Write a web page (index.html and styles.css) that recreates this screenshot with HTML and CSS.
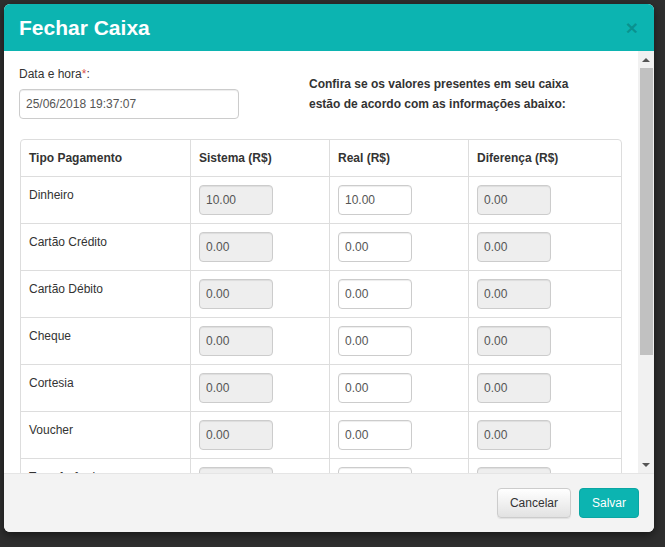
FILE: index.html
```html
<!DOCTYPE html>
<html lang="pt-BR">
<head>
<meta charset="utf-8">
<title>Fechar Caixa</title>
<link rel="stylesheet" href="styles.css">
</head>
<body>
<div class="backdrop">
  <div class="modal">
    <div class="modal-header">
      <h4 class="modal-title">Fechar Caixa</h4>
      <span class="close">×</span>
    </div>
    <div class="modal-main">
      <div class="modal-body">
        <div class="top-row">
          <div class="field">
            <label class="label">Data e hora<span class="req">*</span>:</label>
            <input class="inp inp-date" type="text" value="25/06/2018 19:37:07">
          </div>
          <p class="notice">Confira se os valores presentes em seu caixa<br>estão de acordo com as informações abaixo:</p>
        </div>
        <div class="panel">
          <table class="grid">
            <thead>
              <tr>
                <th class="c1">Tipo Pagamento</th>
                <th class="c2">Sistema (R$)</th>
                <th class="c3">Real (R$)</th>
                <th class="c4">Diferença (R$)</th>
              </tr>
            </thead>
            <tbody>
              <tr><td>Dinheiro</td><td><input class="inp ro" value="10.00" readonly></td><td><input class="inp" value="10.00"></td><td><input class="inp ro" value="0.00" readonly></td></tr>
              <tr><td>Cartão Crédito</td><td><input class="inp ro" value="0.00" readonly></td><td><input class="inp" value="0.00"></td><td><input class="inp ro" value="0.00" readonly></td></tr>
              <tr><td>Cartão Débito</td><td><input class="inp ro" value="0.00" readonly></td><td><input class="inp" value="0.00"></td><td><input class="inp ro" value="0.00" readonly></td></tr>
              <tr><td>Cheque</td><td><input class="inp ro" value="0.00" readonly></td><td><input class="inp" value="0.00"></td><td><input class="inp ro" value="0.00" readonly></td></tr>
              <tr><td>Cortesia</td><td><input class="inp ro" value="0.00" readonly></td><td><input class="inp" value="0.00"></td><td><input class="inp ro" value="0.00" readonly></td></tr>
              <tr><td>Voucher</td><td><input class="inp ro" value="0.00" readonly></td><td><input class="inp" value="0.00"></td><td><input class="inp ro" value="0.00" readonly></td></tr>
              <tr><td>Transferência</td><td><input class="inp ro" value="0.00" readonly></td><td><input class="inp" value="0.00"></td><td><input class="inp ro" value="0.00" readonly></td></tr>
              <tr><td>Outros</td><td><input class="inp ro" value="0.00" readonly></td><td><input class="inp" value="0.00"></td><td><input class="inp ro" value="0.00" readonly></td></tr>
            </tbody>
          </table>
        </div>
      </div>
      <div class="scrollbar">
        <div class="sb-btn sb-up"></div>
        <div class="sb-track"><div class="sb-thumb"></div></div>
        <div class="sb-btn sb-down"></div>
      </div>
    </div>
    <div class="modal-footer">
      <button class="btn btn-default">Cancelar</button>
      <button class="btn btn-primary">Salvar</button>
    </div>
  </div>
</div>
</body>
</html>
```
FILE: styles.css
```css
* { box-sizing: border-box; }

body {
  margin: 0;
  width: 665px;
  height: 547px;
  overflow: hidden;
  background: #2e2e2e;
  font-family: "Liberation Sans", Arial, sans-serif;
  font-size: 12px;
  color: #333;
}

.backdrop {
  padding: 4px 0 0 4px;
}

.modal {
  width: 650px;
  height: 528px;
  background: #fff;
  border-radius: 6px;
  overflow: hidden;
  display: flex;
  flex-direction: column;
  box-shadow: 0 3px 9px rgba(0, 0, 0, 0.5);
}

.modal-header {
  flex: none;
  height: 47px;
  background: #0cb4b1;
  display: flex;
  align-items: center;
  padding: 0 16px 0 15px;
}

.modal-title {
  margin: 0;
  font-size: 21px;
  font-weight: bold;
  line-height: 1;
  color: #fff;
}

.close {
  margin-left: auto;
  font-size: 21px;
  font-weight: bold;
  line-height: 1;
  color: rgba(0, 0, 0, 0.2);
}

.modal-main {
  flex: 1;
  min-height: 0;
  display: flex;
}

.modal-body {
  flex: 1;
  min-width: 0;
  overflow: hidden;
  padding: 15px;
}

.top-row {
  display: grid;
  grid-template-columns: 290px 1fr;
}

.label {
  display: block;
  line-height: 17px;
  margin-bottom: 6px;
}

.req { color: #d9534f; }

.notice {
  margin: 8px 0 0;
  font-weight: bold;
  line-height: 20px;
}

.inp {
  display: block;
  width: 74px;
  height: 30px;
  margin: 0;
  padding: 0 6px;
  border: 1px solid #ccc;
  border-radius: 4px;
  background: #fff;
  font-family: "Liberation Sans", Arial, sans-serif;
  font-size: 12px;
  color: #555;
  box-shadow: inset 0 1px 1px rgba(0, 0, 0, 0.075);
  outline: none;
}

.inp-date { width: 220px; }

.ro { background: #eee; }

.panel {
  width: 602px;
  margin: 20px 0 20px 1px;
  border: 1px solid #ddd;
  border-radius: 4px;
}

.grid {
  width: 600px;
  table-layout: fixed;
  border-collapse: separate;
  border-spacing: 0;
}

.grid th,
.grid td {
  padding: 8px;
  text-align: left;
  vertical-align: top;
  border-left: 1px solid #ddd;
  border-top: 1px solid #ddd;
}

.grid th {
  border-top: none;
  font-weight: bold;
  line-height: 20px;
}

.grid td { line-height: 20px; }

.grid th:first-child,
.grid td:first-child { border-left: none; }

.c1 { width: 169px; }
.c2 { width: 139px; }
.c3 { width: 139px; }
.c4 { width: 153px; }

.scrollbar {
  flex: none;
  width: 16px;
  display: flex;
  flex-direction: column;
  background: #f1f1f1;
}

.sb-btn {
  flex: none;
  height: 17px;
  display: flex;
  align-items: center;
  justify-content: center;
}

.sb-up::before,
.sb-down::before {
  content: "";
  width: 0;
  height: 0;
  border-left: 4px solid transparent;
  border-right: 4px solid transparent;
}

.sb-up::before { border-bottom: 4px solid #555; }
.sb-down::before { border-top: 4px solid #555; }

.sb-track {
  flex: 1;
  padding: 0 1px 0 2px;
}

.sb-thumb {
  height: 287px;
  background: #c1c1c1;
}

.modal-footer {
  flex: none;
  height: 59px;
  background: #f3f3f3;
  border-top: 1px solid #e5e5e5;
  display: flex;
  align-items: center;
  justify-content: flex-end;
  gap: 8px;
  padding: 0 15px;
}

.btn {
  height: 30px;
  padding: 0 12px;
  border-radius: 4px;
  font-family: "Liberation Sans", Arial, sans-serif;
  font-size: 12px;
  line-height: 28px;
  cursor: pointer;
}

.btn-default {
  color: #333;
  border: 1px solid #ccc;
  background: linear-gradient(#fff, #e2e2e2);
  box-shadow: inset 0 1px 0 rgba(255, 255, 255, 0.15), 0 1px 1px rgba(0, 0, 0, 0.075);
}

.btn-primary {
  color: #fff;
  border: 1px solid #0aa6a3;
  background: #0cb4b1;
}
```
